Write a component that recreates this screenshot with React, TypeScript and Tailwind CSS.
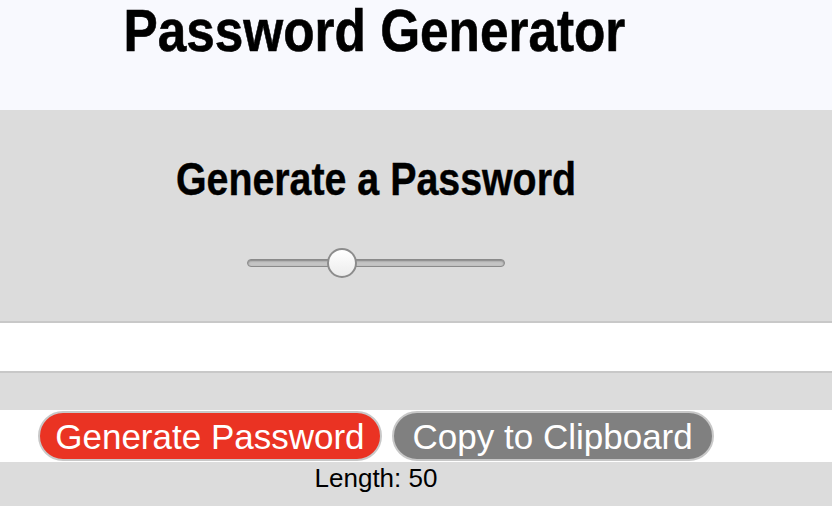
const font = "font-['Liberation_Sans',Arial,sans-serif]";

const Slider = ({ value, min, max }: { value: number; min: number; max: number }) => {
  const pct = (value - min) / (max - min);
  return (
    <div className="relative w-[258px] h-[30px] flex items-center">
      <div className="w-full h-[8px] rounded-full bg-[#c4c4c4] border border-[#8a8a8a] shadow-[inset_0_1px_2px_rgba(0,0,0,0.35)]" />
      <div
        className="absolute top-0 w-[30px] h-[30px] rounded-full bg-gradient-to-b from-white to-[#ececec] border-2 border-[#8c8c8c]"
        style={{ left: `${pct * (258 - 30)}px` }}
      />
    </div>
  );
};

export default function App() {
  return (
    <div className={`w-[832px] h-[506px] overflow-hidden ${font}`}>
      <header className="h-[110px] bg-[#f8f9fe]">
        <div className="w-[748px] text-center">
          <h1 className="inline-block scale-x-[0.855] text-[60px] leading-[62px] font-bold text-black [-webkit-text-stroke:0.6px_black]">
            Password Generator
          </h1>
        </div>
      </header>
      <section className="h-[211px] bg-[#dcdcdc] pt-[46px]">
        <div className="w-[752px] flex flex-col items-center">
          <h2 className="scale-x-[0.855] text-[46px] leading-[46px] font-bold text-black [-webkit-text-stroke:0.4px_black]">
            Generate a Password
          </h2>
          <div className="mt-[46px]">
            <Slider value={50} min={8} max={128} />
          </div>
        </div>
      </section>
      <div className="h-[52px] bg-white border-y-2 border-[#c8c8c8]" />
      <div className="h-[37px] bg-[#dcdcdc]" />
      <div className="h-[52px] bg-white">
        <div className="w-[752px] flex justify-center gap-[10px] pt-px">
          <button className="h-[50px] px-[15px] rounded-full bg-[#ea3323] text-white text-[35px] leading-none border-2 border-[#c8c8c8]">
            Generate Password
          </button>
          <button className="h-[50px] px-[19px] rounded-full bg-[#808080] text-white text-[35px] leading-none border-2 border-[#c8c8c8]">
            Copy to Clipboard
          </button>
        </div>
      </div>
      <div className="h-[44px] bg-[#dcdcdc] pt-[3px]">
        <div className="w-[752px] text-center text-[26px] leading-[27px] text-black">Length: 50</div>
      </div>
    </div>
  );
}
